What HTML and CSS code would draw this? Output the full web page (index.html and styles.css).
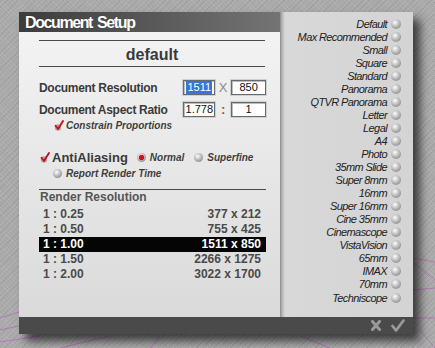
FILE: index.html
```html
<!DOCTYPE html>
<html lang="en">
<head>
    <meta charset="UTF-8">
    <meta name="viewport" content="width=device-width, initial-scale=1.0">
    <title>Document Setup</title>
    <link rel="stylesheet" href="styles.css">
</head>
<body>
    <div class="dialog">
        <div class="main">
            <div class="left">
                <div class="title">Document Setup</div>
                <div class="panel">
                    <div class="preset-name">default</div>

                    <div class="field-row first">
                        <span class="label">Document Resolution</span>
                        <span class="box narrow"><span class="sel">1511</span></span>
                        <span class="sep">X</span>
                        <span class="box">850</span>
                    </div>
                    <div class="field-row">
                        <span class="label">Document Aspect Ratio</span>
                        <span class="box narrow">1.778</span>
                        <span class="sep colon">:</span>
                        <span class="box">1</span>
                    </div>
                    <div class="opt-row constrain">
                        <svg class="check" width="10" height="11" viewBox="0 0 10 11">
                            <circle cx="4" cy="7.5" r="3.2" fill="#a9a9a9"/>
                            <path d="M1.6 5.8 L4 9 L9 1" fill="none" stroke="#c8101e" stroke-width="1.9" stroke-linecap="round" stroke-linejoin="round"/>
                        </svg>
                        <span class="opt-text">Constrain Proportions</span>
                    </div>

                    <div class="opt-row aa">
                        <svg class="check" width="10" height="11" viewBox="0 0 10 11">
                            <circle cx="4" cy="7.5" r="3.2" fill="#a9a9a9"/>
                            <path d="M1.6 5.8 L4 9 L9 1" fill="none" stroke="#c8101e" stroke-width="1.9" stroke-linecap="round" stroke-linejoin="round"/>
                        </svg>
                        <span class="aa-text">AntiAliasing</span>
                        <span class="radio on"></span>
                        <span class="opt-text">Normal</span>
                        <span class="radio"></span>
                        <span class="opt-text">Superfine</span>
                    </div>
                    <div class="opt-row report">
                        <span class="radio"></span>
                        <span class="opt-text">Report Render Time</span>
                    </div>

                    <div class="render">
                        <div class="render-title">Render Resolution</div>
                        <div class="render-row"><span>1 : 0.25</span><span>377 x 212</span></div>
                        <div class="render-row"><span>1 : 0.50</span><span>755 x 425</span></div>
                        <div class="render-row active"><span>1 : 1.00</span><span>1511 x 850</span></div>
                        <div class="render-row"><span>1 : 1.50</span><span>2266 x 1275</span></div>
                        <div class="render-row"><span>1 : 2.00</span><span>3022 x 1700</span></div>
                    </div>
                </div>
            </div>
            <ul class="presets">
                <li>Default<span class="radio"></span></li>
                <li>Max Recommended<span class="radio"></span></li>
                <li>Small<span class="radio"></span></li>
                <li>Square<span class="radio"></span></li>
                <li>Standard<span class="radio"></span></li>
                <li>Panorama<span class="radio"></span></li>
                <li>QTVR Panorama<span class="radio"></span></li>
                <li>Letter<span class="radio"></span></li>
                <li>Legal<span class="radio"></span></li>
                <li>A4<span class="radio"></span></li>
                <li>Photo<span class="radio"></span></li>
                <li>35mm Slide<span class="radio"></span></li>
                <li>Super 8mm<span class="radio"></span></li>
                <li>16mm<span class="radio"></span></li>
                <li>Super 16mm<span class="radio"></span></li>
                <li>Cine 35mm<span class="radio"></span></li>
                <li>Cinemascope<span class="radio"></span></li>
                <li>VistaVision<span class="radio"></span></li>
                <li>65mm<span class="radio"></span></li>
                <li>IMAX<span class="radio"></span></li>
                <li>70mm<span class="radio"></span></li>
                <li>Techniscope<span class="radio"></span></li>
            </ul>
        </div>
        <div class="footer">
            <svg class="cancel" width="10" height="11" viewBox="0 0 10 11">
                <path d="M1.5 1.5 L8.5 9.5 M8.5 1.5 L1.5 9.5" stroke="#9a9a9a" stroke-width="3" stroke-linecap="round"/>
            </svg>
            <svg class="ok" width="14" height="13" viewBox="0 0 14 13">
                <path d="M1.5 7 L5 11.5 L12.5 1.5" fill="none" stroke="#9a9a9a" stroke-width="2.8" stroke-linecap="round" stroke-linejoin="round"/>
            </svg>
        </div>
    </div>
</body>
</html>
```

FILE: styles.css
```css
html,body{
    margin: 0;
    height: 100%;
}
body{
    font-family: "Liberation Sans", Arial, sans-serif;
    background-color: #aaaaaa;
    background-image:
        url("data:image/svg+xml,%3Csvg xmlns='http://www.w3.org/2000/svg' width='435' height='348'%3E%3Cg stroke='%23b86ac0' stroke-width='1' fill='none' opacity='0.8'%3E%3Cpath d='M0 318 L19 312'/%3E%3Cpath d='M0 330 L19 326'/%3E%3Cpath d='M0 342 L40 336'/%3E%3Cpath d='M60 348 L110 336'/%3E%3Cpath d='M150 348 L160 336'/%3E%3Cpath d='M300 336 L330 348'/%3E%3Cpath d='M413 258 L435 262'/%3E%3Cpath d='M413 290 L435 288'/%3E%3Cpath d='M413 318 L435 318'/%3E%3Cpath d='M420 330 L435 348'/%3E%3Cpath d='M413 262 L435 280'/%3E%3C/g%3E%3C/svg%3E"),
        repeating-linear-gradient(45deg, rgba(255,255,255,0.08) 0 1px, transparent 1px 3px),
        repeating-linear-gradient(-45deg, rgba(0,0,0,0.06) 0 1px, transparent 1px 4px);
    overflow: hidden;
}
.dialog{
    width: 394px;
    margin: 12px 0 0 19px;
    display: flex;
    flex-direction: column;
    box-shadow: 7px 7px 9px rgba(0,0,0,0.65);
}
.main{
    display: flex;
    height: 305px;
}
.left{
    width: 261px;
    display: flex;
    flex-direction: column;
}
.title{
    height: 20px;
    line-height: 21px;
    padding-left: 6px;
    background: linear-gradient(to right, #3c3c3c, #747474);
    color: #ffffff;
    font-size: 16px;
    font-weight: bold;
    letter-spacing: -1.4px;
    word-spacing: 2px;
    text-shadow: 0 0 1px rgba(0,0,0,0.4);
}
.panel{
    flex: 1;
    padding: 8px 14px 0 20px;
    background: linear-gradient(#f3f3f3, #dadada);
    color: #3a3a3a;
}
.preset-name{
    height: 25px;
    line-height: 27px;
    border-top: 1px solid #4a4a4a;
    border-bottom: 1px solid #4a4a4a;
    text-align: center;
    font-size: 16px;
    font-weight: bold;
    margin-right: 1px;
}
.field-row{
    display: flex;
    align-items: center;
    height: 15px;
    margin-top: 7px;
}
.field-row.first{
    margin-top: 13px;
}
.label{
    width: 145px;
    font-size: 12px;
    font-weight: bold;
    letter-spacing: -0.3px;
}
.box{
    width: 33px;
    height: 13px;
    line-height: 13px;
    border: 1px solid #6a6a6a;
    box-shadow: 0 0 0 1px #d0d0d0, inset 1px 1px 0 #bdbdbd;
    background: #ffffff;
    color: #111111;
    font-size: 11px;
    text-align: center;
}
.box.narrow{
    width: 30px;
}
.sel{
    display: inline-block;
    background: #3b74d8;
    color: #ffffff;
    padding: 0 1px;
    line-height: 13px;
}
.sep{
    width: 16px;
    text-align: center;
    color: #8a8a8a;
    font-size: 13px;
}
.sep.colon{
    font-weight: bold;
    color: #666666;
}
.opt-row{
    display: flex;
    align-items: center;
}
.opt-text{
    font-size: 10px;
    font-weight: bold;
    font-style: italic;
    color: #3f3f3f;
}
.constrain{
    height: 12px;
    margin-top: 2px;
    padding-left: 15px;
}
.check{
    margin-right: 3px;
}
.constrain .check{
    margin-right: 2px;
}
.aa{
    height: 16px;
    margin-top: 18px;
    padding-left: 1px;
}
.aa .check{
    margin-right: 2px;
}
.aa-text{
    font-size: 13px;
    font-weight: bold;
    margin-right: 9px;
}
.aa .radio{
    margin-right: 4px;
}
.aa .opt-text{
    margin-right: 10px;
}
.report{
    height: 12px;
    margin-top: 2px;
    padding-left: 14px;
}
.report .radio{
    margin-right: 4px;
}
.radio{
    display: inline-block;
    width: 9px;
    height: 9px;
    border-radius: 50%;
    background: radial-gradient(circle at 40% 35%, #ffffff 0, #d8d8d8 25%, #9a9a9a 70%, #6e6e6e 100%);
    flex-shrink: 0;
}
.radio.on{
    background:
        radial-gradient(circle at 50% 50%, #d0101e 0 2.4px, transparent 3px),
        radial-gradient(circle at 40% 35%, #ffffff 0, #d8d8d8 25%, #9a9a9a 70%, #6e6e6e 100%);
}
.render{
    margin-top: 10px;
    border-top: 1px solid #4a4a4a;
}
.render-title{
    height: 14px;
    line-height: 15px;
    padding-left: 1px;
    font-size: 12px;
    font-weight: bold;
    color: #555555;
}
.render-title + .render-row{
    margin-top: 3px;
}
.render-row{
    display: flex;
    justify-content: space-between;
    height: 15px;
    line-height: 15px;
    padding: 0 5px 0 4px;
    font-size: 12px;
    font-weight: bold;
    color: #4a4a4a;
}
.render-row.active{
    background: #050505;
    color: #ffffff;
}
.presets{
    width: 133px;
    margin: 0;
    padding: 5px 12px 0 0;
    box-sizing: border-box;
    list-style: none;
    background: linear-gradient(to right, #8c8c8c 0, #b4b4b4 2px, #d8d8d8 5px, #d4d4d4 100%);
}
.presets li{
    display: flex;
    justify-content: flex-end;
    align-items: center;
    height: 13.05px;
    font-size: 11px;
    font-style: italic;
    letter-spacing: -0.6px;
    color: #222222;
}
.presets .radio{
    width: 10px;
    height: 10px;
    margin-left: 4px;
}
.footer{
    height: 17px;
    background: #4a4a4a;
    display: flex;
    align-items: center;
    justify-content: flex-end;
    padding-right: 8px;
}
.cancel{
    margin-right: 10px;
}
```
